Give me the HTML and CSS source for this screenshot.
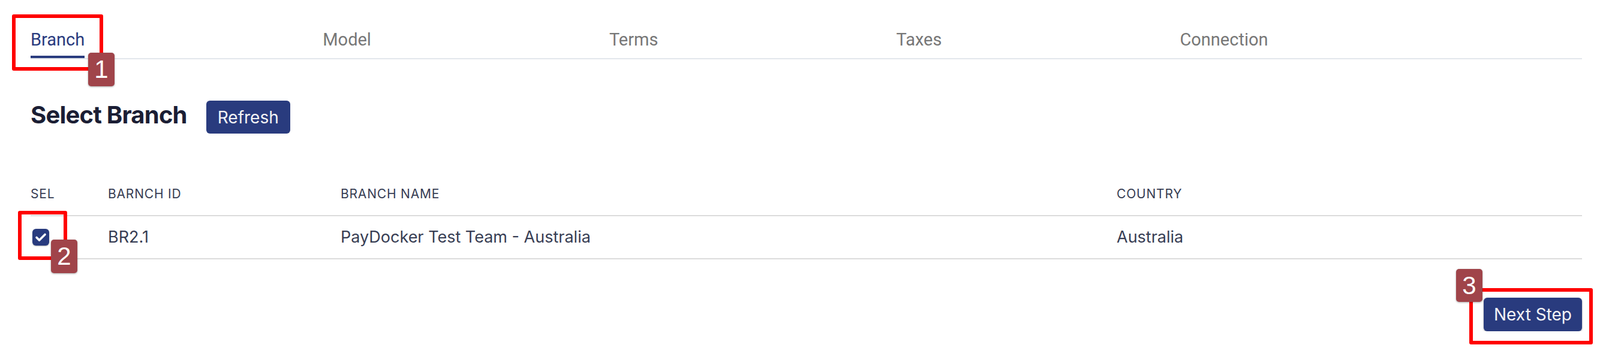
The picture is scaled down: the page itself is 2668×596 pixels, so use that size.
FILE: index.html
```html
<!DOCTYPE html>
<html lang="en">
<head>
  <meta charset="UTF-8">
  <title>Select Branch</title>
  <meta name="viewport" content="width=device-width, initial-scale=1">
  <link rel="stylesheet" href="styles.css">
</head>
<body>
<div class="page">
  <nav class="tabs">
    <div class="tab active">Branch</div>
    <div class="tab">Model</div>
    <div class="tab">Terms</div>
    <div class="tab">Taxes</div>
    <div class="tab">Connection</div>
  </nav>

  <div class="title-row">
    <h1>Select Branch</h1>
    <button class="btn">Refresh</button>
  </div>

  <table class="branches">
    <colgroup>
      <col class="c-sel">
      <col class="c-id">
      <col class="c-name">
      <col>
    </colgroup>
    <thead>
      <tr>
        <th>SEL</th>
        <th>BARNCH ID</th>
        <th>BRANCH NAME</th>
        <th>COUNTRY</th>
      </tr>
    </thead>
    <tbody>
      <tr>
        <td>
          <span class="check">
            <svg width="28" height="28" viewBox="0 0 28 28"><polyline points="7,14.5 11.5,19 21,9.5" fill="none" stroke="#fff" stroke-width="3.6" stroke-linecap="round" stroke-linejoin="round"/></svg>
          </span>
        </td>
        <td>BR2.1</td>
        <td>PayDocker Test Team - Australia</td>
        <td>Australia</td>
      </tr>
    </tbody>
  </table>

  <div class="actions">
    <button class="btn btn-next">Next Step</button>
  </div>
</div>

<!-- annotation marks -->
<div class="mark mark-1"></div>
<div class="mark mark-2"></div>
<div class="mark mark-3"></div>
<div class="badge badge-1">1</div>
<div class="badge badge-2">2</div>
<div class="badge badge-3">3</div>
</body>
</html>
```

FILE: styles.css
```css
:root {
  --navy: #293b7e;
  --ink: #1b1e34;
  --text: #373d53;
  --muted: #777777;
  --line: #dcdcdc;
  --tabline: #e3e7ec;
  --red: #ff0000;
  --badge: #a0444a;
}
body {
  margin: 0;
  background: #fff;
  font-family: Inter, 'Noto Sans', sans-serif;
  color: var(--text);
}
.page {
  padding: 0 30px 0 51px;
}
.tabs {
  display: flex;
  gap: 397px;
  padding-top: 49px;
  border-bottom: 2px solid var(--tabline);
  font-family: Roboto, sans-serif;
  font-size: 29px;
}
.tab {
  line-height: 34px;
  padding-bottom: 10px;
  border-bottom: 4px solid transparent;
  color: var(--muted);
}
.tab.active {
  color: var(--navy);
  border-color: var(--navy);
}
.title-row {
  display: flex;
  align-items: flex-start;
  gap: 32px;
  margin-top: 69px;
}
h1 {
  margin: 0;
  font-size: 40px;
  line-height: 48px;
  font-weight: 700;
  letter-spacing: -0.8px;
  color: var(--ink);
}
.btn {
  height: 55px;
  padding: 0 19px;
  border: none;
  border-radius: 6px;
  background: var(--navy);
  color: #f4f4f6;
  font-family: Inter, sans-serif;
  font-size: 28px;
  cursor: pointer;
}
.branches {
  width: 100%;
  margin-top: 66px;
  border-collapse: separate;
  border-spacing: 0;
  table-layout: fixed;
}
.c-sel { width: 129px; }
.c-id { width: 388px; }
.c-name { width: 1294px; }
.branches th {
  padding: 22px 0;
  line-height: 26px;
  font-size: 21px;
  font-weight: 400;
  letter-spacing: 0.8px;
  text-align: left;
  border-bottom: 2px solid var(--line);
}
.branches td {
  padding: 19px 0;
  line-height: 32px;
  font-size: 27px;
  vertical-align: middle;
  border-bottom: 2px solid var(--line);
}
.check {
  display: block;
  width: 28px;
  height: 28px;
  margin-left: 3px;
  border-radius: 6px;
  background: var(--navy);
  box-shadow: 0 1px 2px rgba(0, 0, 0, 0.3);
}
.check svg { display: block; }
.actions {
  display: flex;
  justify-content: flex-end;
  margin-top: 64px;
}
.btn-next {
  height: 56px;
  padding: 0 17px;
  box-shadow: 0 1px 3px rgba(0, 0, 0, 0.35);
}
.mark {
  position: absolute;
  box-sizing: border-box;
  border: 6px solid var(--red);
  border-radius: 3px;
}
.mark-1 { left: 20px; top: 24px; width: 152px; height: 94px; }
.mark-2 { left: 30px; top: 352px; width: 82px; height: 82px; }
.mark-3 { left: 2450px; top: 481px; width: 206px; height: 94px; }
.badge {
  position: absolute;
  width: 44px;
  height: 56px;
  border-radius: 5px;
  background: var(--badge);
  color: #fff;
  font-family: 'Liberation Sans', Arial, sans-serif;
  font-size: 42px;
  line-height: 56px;
  text-align: center;
  box-shadow: 0 1px 3px rgba(0, 0, 0, 0.35);
}
.badge-1 { left: 147px; top: 88px; }
.badge-2 { left: 85px; top: 400px; }
.badge-3 { left: 2428px; top: 449px; height: 55px; line-height: 55px; }
```
